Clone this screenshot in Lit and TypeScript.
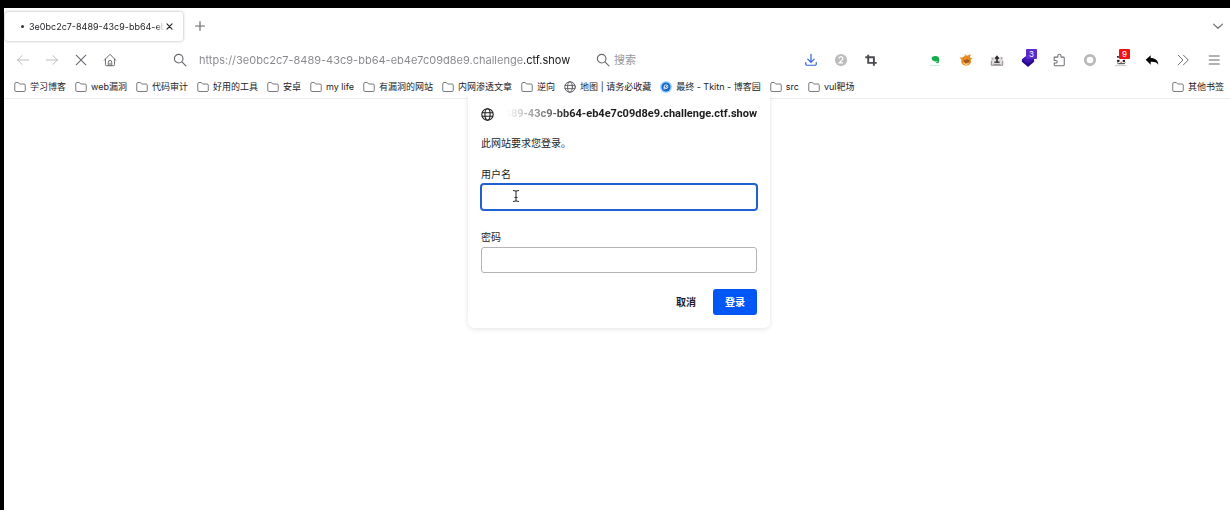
import { LitElement, html, css, svg } from "lit";
import { customElement } from "lit/decorators.js";

const HOST = "3e0bc2c7-8489-43c9-bb64-eb4e7c09d8e9.challenge.ctf.show";

const line = (body: unknown, color = "#66666d", width = 1.1) => html`
  <svg viewBox="0 0 16 16" fill="none" stroke=${color} stroke-width=${width}
    stroke-linecap="round" stroke-linejoin="round" aria-hidden="true">${body}</svg>`;

const icons = {
  back: line(svg`<path d="M14.500 8H1.800M7 3 1.800 8 7 13"/>`, "#b9b9bd", 1.1),
  forward: line(svg`<path d="M1.500 8h12.700M9 3l5.200 5L9 13"/>`, "#b9b9bd", 1.1),
  stop: line(svg`<path d="M2.500 2.500l11 11M13.500 2.500l-11 11"/>`, "#66666d", 1.2),
  home: line(svg`<path d="M1.500 8.200 8 1.500l6.500 6.700M2.800 7v6.500a1 1 0 0 0 1 1h8.400a1 1 0 0 0 1-1V7M6 14.500v-4a2 2 0 0 1 4 0v4M8 11.500v3"/>`, "#66666d", 1.1),
  search: line(svg`<circle cx="6.500" cy="6.500" r="4.900"/><path d="M10.200 10.200l4.600 4.600"/>`, "#66666d", 1.3),
  plus: line(svg`<path d="M8 2v12M2 8h12"/>`, "#66666d", 1.5),
  close: line(svg`<path d="M3.500 3.500l9 9M12.500 3.500l-9 9"/>`, "#222", 2),
  chevron: line(svg`<path d="M2 5.500 8 11l6-5.500"/>`, "#66666d", 1.4),
  globe: line(svg`<circle cx="8" cy="8" r="7"/><ellipse cx="8" cy="8" rx="3.200" ry="7"/><path d="M1.500 5.800h13M1.500 10.200h13"/>`, "#55555b", 1.2),
  globeDark: line(svg`<circle cx="8" cy="8" r="7"/><ellipse cx="8" cy="8" rx="3.200" ry="7"/><path d="M1.500 5.800h13M1.500 10.200h13"/>`, "#1c1c1f", 1.3),
  folder: line(svg`<path d="M1 3.500a1.500 1.500 0 0 1 1.500-1.500h3.300l1.700 2h6a1.500 1.500 0 0 1 1.500 1.500v7a1.500 1.500 0 0 1-1.500 1.500h-11A1.500 1.500 0 0 1 1 12.500z"/>`, "#6b6b70", 1.2),
  site: html`<svg viewBox="0 0 16 16" aria-hidden="true"><circle cx="8" cy="8" r="8" fill="#9dd6fb"/><circle cx="8" cy="8" r="6" fill="#1766cc"/><circle cx="8" cy="7.600" r="2.500" stroke="#fff" stroke-width="1.100" fill="none"/><path d="M5.500 7.600V11M8 8.500l1-2" stroke="#fff" stroke-width="1.100" fill="none" stroke-linecap="round"/></svg>`,
  download: line(svg`<path d="M8 1.500v9M4.300 7 8 10.700 11.700 7M2 11v1.500A1.500 1.500 0 0 0 3.500 14h9a1.500 1.500 0 0 0 1.500-1.500V11"/>`, "#2f66cf", 1.4),
  two: html`<svg viewBox="0 0 16 16" aria-hidden="true"><circle cx="8" cy="8" r="7" fill="#bdbdbd"/><path d="M5.900 6.200a2.100 2.100 0 1 1 3.700 1.400L6 11.200h4.200" stroke="#fff" stroke-width="1.400" fill="none"/></svg>`,
  crop: html`<svg viewBox="0 0 16 16" aria-hidden="true"><path d="M4.800 2v9.300H14.500M1.500 4.800h9.800V14.500" stroke="#4a4a50" stroke-width="2.200" fill="none"/></svg>`,
  green: html`<svg viewBox="0 0 16 16" aria-hidden="true"><path d="M4 5.500Q5 3.500 8 3.500c3.500 0 4.800 1.300 4.800 3.800 0 3-.5 4.500-2.400 4.500-1.500 0-1.700-1-1.400-2C6.500 9.700 4.200 8.500 4 5.500z" fill="#12ad4b"/><path d="M9 10h1.800" stroke="#fff" stroke-width=".9"/><path d="M1.500 14.300h12.500" stroke="#cfeeda" stroke-width="1.400"/></svg>`,
  fox: html`<svg viewBox="0 0 16 16" aria-hidden="true"><circle cx="8" cy="9" r="5.600" fill="#eda347"/><path d="M.5 5l3.500.2L7 3.500l-1-2.300 3 2L13.500 1.500 12.500 5l3 1-2.500 2 .5 3-3 3.200L8 13l-3 .5L3 10.500l1-2z" fill="#e58a25"/><path d="M4.500 7.500l3 1 1.500-2 1.500 1.500 2-.5-1 3-2.500.5-2 1.500-1-2.500z" fill="#a9551a"/><path d="M5 11l3 2 3-1" stroke="#fbdd9b" stroke-width="1.200" fill="none"/></svg>`,
  fetch: html`<svg viewBox="0 0 16 16" aria-hidden="true"><path d="M1 4.500h14V14.500H1z" fill="#e0dede"/><path d="M8 4v7M6 6.500 8 4l2 2.500" stroke="#29282a" stroke-width="1.800" fill="none"/><path d="M5 10.500h6" stroke="#3b3a3b" stroke-width="1.600"/><path d="M1.500 9v5h13V9M4 13h8M3 6v1.500M13 5v2" stroke="#8b8585" stroke-width="1" fill="none"/></svg>`,
  gem: html`<svg viewBox="0 0 16 16" aria-hidden="true"><path d="M8 2l7 5.500v2.500L8 16 1 10V7.500z" fill="#2a078f"/><path d="M8 2l7 5.500L8 12 1 7.500z" fill="#4016ac"/></svg>`,
  puzzle: line(svg`<path d="M2.500 4.700h4.200V3.200a1.800 1.800 0 0 1 3.600 0v1.500H13a1 1 0 0 1 1 1V13.500a1 1 0 0 1-1 1H3.500a1 1 0 0 1-1-1v-2h2a1.500 1.500 0 0 0 0-3h-2z"/>`, "#737379", 1.2),
  ring: html`<svg viewBox="0 0 16 16" aria-hidden="true"><circle cx="8" cy="8" r="5.400" fill="none" stroke="#b9b9b9" stroke-width="3.200"/></svg>`,
  panda: html`<svg viewBox="0 0 16 16" aria-hidden="true"><path d="M3.500 3.500h2v2h-2zM3.500 7.800l3 .2-.5 2.600-2.500-.5zM10 8l2.500-.3v2.600l-2.500.3z" fill="#242224"/><path d="M3.500 11l1.500 1.200h6.500L13 11" stroke="#333" stroke-width="1.100" fill="none"/><path d="M7.300 10.500h1.800" stroke="#c73c3c" stroke-width="1.200"/><path d="M1.500 14.300h12.500" stroke="#d3cccd" stroke-width="1.500"/></svg>`,
  reply: html`<svg viewBox="0 0 16 16" aria-hidden="true"><path d="M6.500 2.500v3.200c5 .1 8.500 2.300 8.800 7.800-2-3-4.500-3.600-8.800-3.500v3.300L.8 7.800z" fill="#080808"/></svg>`,
  more: line(svg`<path d="M2.500 2.500 8 8l-5.500 5.500M8.500 2.500 14 8l-5.500 5.500"/>`),
  menu: line(svg`<path d="M2.500 3.500h11.500M2.500 8h11.500M2.500 12.500h11.500"/>`, "#66666d", 1.2),
};

const folders = (names: string[]) => names.map((label) => ({ label, icon: icons.folder }));
const BOOKMARKS = [
  ...folders(["学习博客", "web漏洞", "代码审计", "好用的工具", "安卓", "my life", "有漏洞的网站", "内网渗透文章", "逆向"]),
  { label: "地图 | 请务必收藏", icon: icons.globe },
  { label: "最终 - Tkitn - 博客园", icon: icons.site },
  ...folders(["src", "vul靶场"]),
];

const PAGE_TOOLS = [
  { name: "下载", icon: icons.download },
  { name: "通知", icon: icons.two },
  { name: "截图", icon: icons.crop },
];
const EXTENSIONS: { name: string; icon: unknown; badge?: string; tone?: string }[] = [
  { name: "剪藏", icon: icons.green },
  { name: "FoxyProxy", icon: icons.fox },
  { name: "抓取", icon: icons.fetch },
  { name: "Wappalyzer", icon: icons.gem, badge: "3", tone: "violet" },
  { name: "扩展", icon: icons.puzzle },
  { name: "代理", icon: icons.ring },
  { name: "HackTools", icon: icons.panda, badge: "9", tone: "red" },
  { name: "撤销", icon: icons.reply },
  { name: "更多工具", icon: icons.more },
  { name: "菜单", icon: icons.menu },
];

const shared = css`
  * { box-sizing: border-box; }
  svg { display: block; width: 100%; height: 100%; overflow: visible; }
  button { font: inherit; color: inherit; border: 0; background: none; padding: 0; margin: 0; }
  input { font: inherit; margin: 0; outline: 0; }
`;

@customElement("login-prompt")
export class LoginPrompt extends LitElement {
  static styles = [shared, css`
    :host { display: block; }
    .panel {
      display: flex; flex-direction: column; padding: 10px 13px 13px; background: #fff;
      border-radius: 0 0 6px 6px; box-shadow: 0 1px 5px rgba(30, 30, 60, 0.13);
      font-size: 10px; line-height: 16px; color: #1c1c1f; clip-path: inset(0 -8px -8px -8px);
    }
    .origin { display: flex; align-items: center; gap: 13px; height: 16px; }
    .globe { flex: none; width: 13px; height: 13px; }
    .host {
      flex: 1; min-width: 0; display: flex; justify-content: flex-end; overflow: hidden;
      white-space: nowrap; font-family: Roboto, Inter, sans-serif; font-size: 11px; font-weight: 700;
      mask-image: linear-gradient(to right, transparent, #000 64px);
    }
    .message { margin: 13px 0 15px; }
    .field { display: flex; flex-direction: column; gap: 2px; margin-bottom: 17px; }
    .box { width: 100%; height: 26px; padding: 0 8px; border: 1px solid #b3b3b8; border-radius: 3px; background: #fff; }
    .box.active { border-color: #1f5fd0; box-shadow: 0 0 0 1px #1f5fd0; }
    .field + .field { margin-bottom: 16px; padding-top: 2px; }
    .actions { display: flex; justify-content: flex-end; gap: 5px; font-weight: 700; }
    .action { height: 26px; padding: 0 12px; border-radius: 3px; }
    .primary { background: #0057f5; color: #fff; }
  `];

  render() {
    return html`
      <form class="panel" role="dialog" aria-label="登录" @submit=${(e: Event) => e.preventDefault()}>
        <div class="origin"><span class="globe">${icons.globeDark}</span><span class="host">${HOST}</span></div>
        <p class="message">此网站要求您登录。</p>
        <div class="field"><label for="user">用户名</label><input class="box active" id="user" type="text" /></div>
        <div class="field"><label for="pass">密码</label><input class="box" id="pass" type="password" /></div>
        <div class="actions">
          <button class="action" type="button">取消</button>
          <button class="action primary" type="submit">登录</button>
        </div>
      </form>`;
  }
}

@customElement("app-root")
export class AppRoot extends LitElement {
  static styles = [shared, css`
    :host {
      display: block; min-height: 100vh; box-sizing: border-box; background: #fff;
      border: solid #000; border-width: 8px 0 0 4px; position: relative;
      font-family: Inter, "Noto Sans CJK SC", sans-serif; font-size: 9px; color: #222226;
    }
    .tabs { display: flex; align-items: center; height: 36px; padding: 0 6px 0 1px; }
    .tab {
      display: flex; align-items: center; width: 178px; height: 29px; padding: 0 9px 0 16px;
      border-radius: 3px; box-shadow: 0 0 3px rgba(0, 0, 0, 0.35);
    }
    .dot { flex: none; width: 3px; height: 3px; border-radius: 50%; background: #333; margin-right: 5px; }
    .title {
      flex: 1; min-width: 0; overflow: hidden; white-space: nowrap;
      mask-image: linear-gradient(to left, transparent, #000 8px);
    }
    .close { flex: none; width: 9px; height: 9px; margin-left: 1px; }
    .new { width: 12px; height: 12px; margin-left: 11px; }
    .list { width: 12px; height: 12px; margin-left: auto; }
    .toolbar { display: flex; align-items: center; height: 31px; padding: 0 9px 0 12px; }
    .nav { display: flex; gap: 15px; }
    .tool { position: relative; display: block; flex: none; width: 14px; height: 14px; }
    .address { flex: 403; display: flex; align-items: center; gap: 12px; margin-left: 56px; min-width: 0; }
    .url {
      flex: 1; min-width: 0; padding: 0; height: 20px; border: 0; font-size: 11px; color: transparent;
      background: linear-gradient(to right, #85858a 325px, #141416 325px); background-clip: text;
    }
    .find { flex: 208; display: flex; align-items: center; gap: 4px; margin-left: 20px; min-width: 0; }
    .query { flex: 1; width: 0; min-width: 0; padding: 0; height: 20px; border: 0; background: none; font-size: 11px; }
    .query::placeholder { color: #97979c; opacity: 1; }
    .group { display: flex; gap: 16px; }
    .group.extensions { gap: 17px; margin-left: 50px; }
    .badge {
      position: absolute; left: 5px; top: -4px; width: 11px; height: 10px; border-radius: 1px;
      font-size: 8px; line-height: 10px; text-align: center; color: #fff;
    }
    .violet { background: #5b2bd0; }
    .red { background: #f01212; }
    .bookmarks { display: flex; align-items: center; gap: 9px; height: 24px; padding: 0 6px 0 10px; border-bottom: 1px solid #ececef; }
    .bookmark { display: flex; align-items: center; gap: 4px; white-space: nowrap; color: inherit; text-decoration: none; line-height: 16px; }
    .mark { flex: none; width: 12px; height: 12px; }
    .other { margin-left: auto; }
    .prompt { position: absolute; top: 88px; left: calc(50% - 149px); width: 302px; }
    .cursor { position: absolute; top: 181px; left: calc(50% - 106px); width: 10px; height: 14px; pointer-events: none; }
  `];

  private tool(t: { name: string; icon: unknown; badge?: string; tone?: string }) {
    return html`<button class="tool" aria-label=${t.name}>${t.icon}${t.badge
      ? html`<span class="badge ${t.tone}">${t.badge}</span>` : ""}</button>`;
  }

  private bookmark(label: string, icon: unknown, extra = "") {
    return html`<a class="bookmark ${extra}" href="#"><span class="mark">${icon}</span>${label}</a>`;
  }

  render() {
    return html`
      <div class="tabs">
        <div class="tab">
          <span class="dot"></span><span class="title">${HOST}</span>
          <button class="close" aria-label="关闭标签页">${icons.close}</button>
        </div>
        <button class="new" aria-label="新建标签页">${icons.plus}</button>
        <button class="list" aria-label="列出标签页">${icons.chevron}</button>
      </div>
      <div class="toolbar">
        <div class="nav">
          ${[["后退", icons.back], ["前进", icons.forward], ["停止", icons.stop], ["主页", icons.home]]
            .map(([name, icon]) => this.tool({ name: name as string, icon }))}
        </div>
        <div class="address">
          <span class="tool">${icons.search}</span>
          <input class="url" aria-label="网址" .value=${"https://" + HOST} />
        </div>
        <div class="find">
          <span class="tool">${icons.search}</span>
          <input class="query" aria-label="搜索" placeholder="搜索" />
        </div>
        <div class="group">${PAGE_TOOLS.map((t) => this.tool(t))}</div>
        <div class="group extensions">${EXTENSIONS.map((t) => this.tool(t))}</div>
      </div>
      <nav class="bookmarks">
        ${BOOKMARKS.map((b) => this.bookmark(b.label, b.icon))}
        ${this.bookmark("其他书签", icons.folder, "other")}
      </nav>
      <login-prompt class="prompt"></login-prompt>
      <svg class="cursor" viewBox="0 0 10 14" fill="none" stroke="#333" stroke-width="1.100" aria-hidden="true">
        <path d="M2 1.500q2.500 0 3 1 .5-1 3-1M5 2.500v9M2 12.500q2.500 0 3-1 .5 1 3 1M3.500 8.500h3"/>
      </svg>`;
  }
}
